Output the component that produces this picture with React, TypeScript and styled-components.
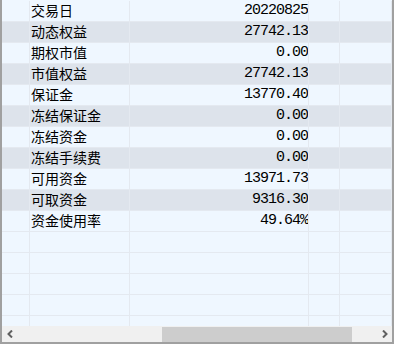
import styled, { createGlobalStyle } from 'styled-components'

const ROWS: [string, string][] = [
  ['交易日', '20220825'],
  ['动态权益', '27742.13'],
  ['期权市值', '0.00'],
  ['市值权益', '27742.13'],
  ['保证金', '13770.40'],
  ['冻结保证金', '0.00'],
  ['冻结资金', '0.00'],
  ['冻结手续费', '0.00'],
  ['可用资金', '13971.73'],
  ['可取资金', '9316.30'],
  ['资金使用率', '49.64%'],
]
const EMPTY_ROWS = 5

const GlobalStyle = createGlobalStyle`
  body {
    margin: 0;
    font-family: "Noto Sans CJK SC", "Liberation Sans", sans-serif;
  }
`

const Frame = styled.div`
  width: 394px;
  height: 344px;
  box-sizing: border-box;
  border: 2px solid #a0a0a0;
  border-top: none;
  background: #eff7ff;
  display: flex;
  flex-direction: column;
`

const Table = styled.div`
  flex: 1;
  overflow: hidden;
  padding-top: 1px;
`

const Row = styled.div<{ $alt: boolean }>`
  display: grid;
  grid-template-columns: 28px 100px 179px 31px 1fr;
  height: 21px;
  background: ${(p) => (p.$alt ? '#dde3eb' : '#eff7ff')};
`

const Cell = styled.div`
  box-sizing: border-box;
  border-right: 1px solid #e4e9f0;
  border-bottom: 1px solid #e4e9f0;
  overflow: hidden;
  white-space: nowrap;
`

const Label = styled(Cell)`
  padding-left: 1px;
  font-family: "Noto Sans CJK SC", sans-serif;
  font-size: 14px;
  line-height: 19px;
  color: #000;
`

const Value = styled(Cell)`
  padding-right: 0;
  text-align: right;
  font-family: "Liberation Mono", monospace;
  font-size: 15px;
  letter-spacing: -1px;
  line-height: 20px;
  color: #000;
`

const ScrollBar = styled.div`
  height: 16px;
  display: flex;
  background: #f0f0f0;
`

const Arrow = styled.div`
  width: 16px;
  display: flex;
  align-items: center;
  justify-content: center;
`

const Track = styled.div`
  flex: 1;
  display: flex;
  padding: 1px 0 0;
`

const Thumb = styled.div`
  margin-left: 144px;
  width: 190px;
  background: #cdcdcd;
`

const Chevron = ({ dir }: { dir: 'left' | 'right' }) => (
  <svg width="7" height="8" viewBox="0 0 7 8">
    <path
      d={dir === 'left' ? 'M5 0.5 L1.5 4 L5 7.5' : 'M2 0.5 L5.5 4 L2 7.5'}
      fill="none"
      stroke="#606060"
      strokeWidth="2"
    />
  </svg>
)

export default function App() {
  return (
    <>
      <GlobalStyle />
      <Frame>
        <Table>
          {ROWS.map(([name, value], idx) => (
            <Row key={name} $alt={idx % 2 === 1}>
              <Cell />
              <Label>{name}</Label>
              <Value>{value}</Value>
              <Cell />
              <Cell />
            </Row>
          ))}
          {Array.from({ length: EMPTY_ROWS }).map((_, idx) => (
            <Row key={'e' + idx} $alt={false}>
              <Cell />
              <Cell />
              <Cell />
              <Cell />
              <Cell />
            </Row>
          ))}
        </Table>
        <ScrollBar>
          <Arrow>
            <Chevron dir="left" />
          </Arrow>
          <Track>
            <Thumb />
          </Track>
          <Arrow>
            <Chevron dir="right" />
          </Arrow>
        </ScrollBar>
      </Frame>
    </>
  )
}
